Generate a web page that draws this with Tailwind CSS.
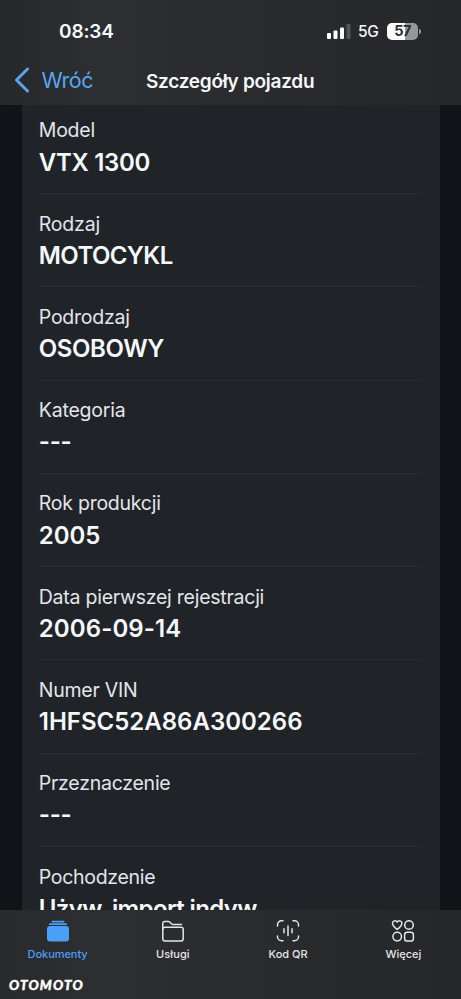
<!DOCTYPE html>
<html lang="pl">
<head>
<meta charset="utf-8">
<meta name="viewport" content="width=device-width">
<title>Szczegóły pojazdu</title>
<script src="https://cdn.jsdelivr.net/npm/@tailwindcss/browser@4"></script>
</head>
<body class="bg-[#101317]">
<div class="flex h-[999px] w-[461px] flex-col overflow-hidden font-['Inter',sans-serif] text-[#f5f8fb]">
  <header class="h-[104.5px] shrink-0 bg-linear-to-r from-[#27282a] via-[#2d2e31] via-20% to-[#262729]">
    <div class="flex h-[62px] items-center justify-between pr-[40px] pl-[59px]">
      <span class="pt-[2px] text-[19px] leading-6 font-semibold tracking-[-0.15px]">08:34</span>
      <div class="flex items-center">
        <svg class="h-[15px] w-[24px]" viewBox="0 0 24 15" fill="#fff"><rect x="0" y="9" width="4" height="6" rx="1"/><rect x="6.5" y="6.5" width="4" height="8.5" rx="1"/><rect x="13" y="3.5" width="4" height="11.5" rx="1"/><rect x="19.5" y="0" width="4" height="15" rx="1" fill="#535457"/></svg>
        <span class="ml-[7.5px] w-[21px] pt-px text-[15.5px] leading-5 font-medium tracking-[-0.3px] whitespace-nowrap">5G</span>
        <div class="ml-[8px] flex h-[17px] w-[31px] items-center justify-center rounded-[5px] bg-linear-to-r from-white from-57% to-[#96979a] to-57% text-[14.5px] leading-none font-bold tracking-[-0.6px] text-[#2c2d30]">57</div>
        <div class="ml-[1px] h-[5px] w-[2px] rounded-r-full bg-[#96979a]"></div>
      </div>
    </div>
    <div class="grid h-[38px] grid-cols-[146px_1fr] items-center">
      <div class="flex items-center pl-[14px] text-[#58a5f3]">
        <svg class="-mt-[2px] h-[26px] w-[16px]" viewBox="0 0 16 26" fill="none" stroke="currentColor" stroke-width="3" stroke-linecap="round" stroke-linejoin="round"><path d="M13.5 2 2.5 13l11 11"/></svg>
        <span class="-mt-[2px] ml-[11.5px] text-[21.5px] leading-7 tracking-[-0.45px]">Wróć</span>
      </div>
      <h1 class="pt-px text-[19px] leading-7 font-semibold tracking-[-0.27px] whitespace-nowrap">Szczegóły pojazdu</h1>
    </div>
  </header>

  <main class="min-h-0 flex-1 overflow-hidden">
    <dl id="details" class="ml-[21.5px] w-[418px] bg-[#202327] pr-[17.5px] pl-[17.3px] whitespace-nowrap">
      <div class="h-[89.5px] border-b border-[#2a2e32] pt-[11.5px]"><dt class="text-[19.5px] leading-[28px] text-[#e3e6e9]"><span class="tracking-[-0.25px]">Model</span></dt><dd class="mt-[2.5px] text-[24px] leading-[32px] font-semibold"><span class="tracking-[-0.3px]">VTX 1300</span></dd></div>
      <div class="h-[93.3px] border-b border-[#2a2e32] pt-[15.7px]"><dt class="text-[19.5px] leading-[28px] text-[#e3e6e9]"><span class="tracking-[-0.2px]">Rodzaj</span></dt><dd class="mt-[2px] text-[24px] leading-[32px] font-semibold"><span class="tracking-[-0.6px]">MOTOCYKL</span></dd></div>
      <div class="h-[93.3px] border-b border-[#2a2e32] pt-[15.7px]"><dt class="text-[19.5px] leading-[28px] text-[#e3e6e9]"><span class="tracking-[-0.25px]">Podrodzaj</span></dt><dd class="mt-[2px] text-[24px] leading-[32px] font-semibold"><span class="tracking-[-0.4px]">OSOBOWY</span></dd></div>
      <div class="h-[93.3px] border-b border-[#2a2e32] pt-[15.7px]"><dt class="text-[19.5px] leading-[28px] text-[#e3e6e9]"><span class="tracking-[-0.2px]">Kategoria</span></dt><dd class="mt-[2px] text-[24px] leading-[32px] font-semibold"><span class="tracking-[-0.3px]">---</span></dd></div>
      <div class="h-[93.3px] border-b border-[#2a2e32] pt-[15.5px]"><dt class="text-[19.5px] leading-[28px] text-[#e3e6e9]"><span class="tracking-[-0.25px]">Rok produkcji</span></dt><dd class="mt-[2.2px] text-[24px] leading-[32px] font-semibold"><span class="tracking-[-0.05px]">2005</span></dd></div>
      <div class="h-[93.3px] border-b border-[#2a2e32] pt-[15.7px]"><dt class="text-[19.5px] leading-[28px] text-[#e3e6e9]"><span class="tracking-[-0.25px]">Data pierwszej rejestracji</span></dt><dd class="mt-[2px] text-[24px] leading-[32px] font-semibold"><span class="tracking-[0.1px]">2006-09-14</span></dd></div>
      <div class="h-[93.3px] border-b border-[#2a2e32] pt-[15.5px]"><dt class="text-[19.5px] leading-[28px] text-[#e3e6e9]"><span class="tracking-[-0.25px]">Numer VIN</span></dt><dd class="mt-[2px] text-[24px] leading-[32px] font-semibold"><span class="tracking-[0px]">1HFSC52A86A300266</span></dd></div>
      <div class="h-[93.3px] border-b border-[#2a2e32] pt-[15.5px]"><dt class="text-[19.5px] leading-[28px] text-[#e3e6e9]"><span class="tracking-[-0.25px]">Przeznaczenie</span></dt><dd class="mt-[2px] text-[24px] leading-[32px] font-semibold"><span class="tracking-[-0.3px]">---</span></dd></div>
      <div class="h-[93.3px] pt-[15.7px]"><dt class="text-[19.5px] leading-[28px] text-[#e3e6e9]"><span class="tracking-[-0.3px]">Pochodzenie</span></dt><dd class="mt-[2px] text-[24px] leading-[32px] font-semibold"><span class="tracking-[-0.63px]">Używ. import indyw.</span></dd></div>
    </dl>
  </main>

  <footer class="h-[89.5px] shrink-0 bg-linear-to-r from-[#292a2c] via-[#2d2e31] via-20% to-[#262729]">
    <nav class="grid h-[65px] grid-cols-4 text-[11px] leading-4 font-medium">
      <a class="flex flex-col items-center pt-[10px] text-[#4a9ff8]">
        <svg class="h-[23px] w-[24px]" viewBox="0 0 24 23" fill="currentColor"><rect x="5.5" y="0.8" width="13" height="1.6" rx=".8"/><rect x="3" y="3.3" width="18" height="1.8" rx=".9"/><rect x="1" y="6" width="22" height="15.5" rx="3"/></svg>
        <span class="mt-[3.5px] tracking-[-0.05px]">Dokumenty</span>
      </a>
      <a class="flex flex-col items-center pt-[10px] text-[#e4e5e7]">
        <svg class="h-[23px] w-[24px]" viewBox="0 0 24 23" fill="none" stroke="currentColor" stroke-width="1.5" stroke-linejoin="round" stroke-linecap="round"><path d="M1.800 9V3.300a1.800 1.800 0 0 1 1.800-1.800H7.500c1.800 0 2.400 2.900 4.200 2.900H20.500"/><rect x="1.8" y="7.2" width="20.4" height="13.7" rx="2.2"/></svg>
        <span class="mt-[3.5px] tracking-[0.1px]">Usługi</span>
      </a>
      <a class="flex flex-col items-center pt-[10px] text-[#e4e5e7]">
        <svg class="h-[23px] w-[24px]" viewBox="0 0 24 23" fill="none" stroke="currentColor" stroke-width="1.5" stroke-linecap="round"><path d="M1.500 6V4.800A4 4 0 0 1 5.500.8H7M17 .8h1.500a4 4 0 0 1 4 4V6M22.500 16v.7a4 4 0 0 1-4 4H17M7 20.700H5.500a4 4 0 0 1-4-4V16M8 8.800v4M12 6v9.500M16 8.800v4"/></svg>
        <span class="mt-[3.5px]">Kod QR</span>
      </a>
      <a class="flex flex-col items-center pt-[10px] text-[#e4e5e7]">
        <svg class="h-[23px] w-[24px]" viewBox="0 0 24 23" fill="none" stroke="currentColor" stroke-width="1.5" stroke-linejoin="round"><path d="M6.200 9.400C3.500 7.400 1.500 5.500 1.500 3.300 1.500.7 4.800-.2 6.200 2.200 7.600-.2 10.900.7 10.900 3.300c0 2.200-2 4.100-4.700 6.100Z"/><circle cx="18" cy="5" r="4.3"/><circle cx="6.2" cy="16.6" r="4.3"/><rect x="13.6" y="12.2" width="8.8" height="8.8" rx="2.6"/></svg>
        <span class="mt-[3.5px]">Więcej</span>
      </a>
    </nav>
    <div class="-mt-px pl-[9px] font-['Lato',sans-serif] text-[13.5px] leading-[22px] font-black tracking-[1.15px] text-white italic [-webkit-text-stroke:0.4px_white]">OTOMOTO</div>
  </footer>
</div>
</body>
</html>
